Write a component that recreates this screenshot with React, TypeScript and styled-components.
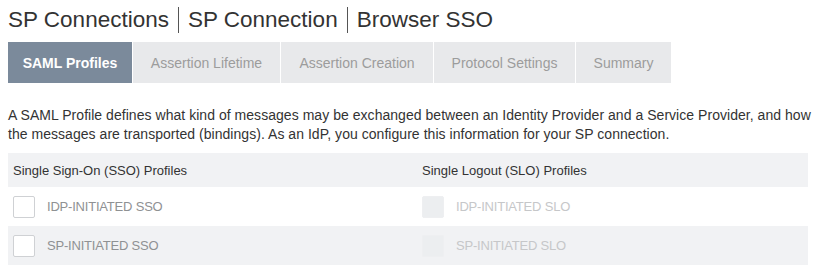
import styled, { createGlobalStyle } from "styled-components";

const GlobalStyle = createGlobalStyle`
    body {
        margin: 0;
        background: #ffffff;
        font-family: "Liberation Sans", Arial, sans-serif;
        color: #333333;
    }
`;

const Page = styled.div`
    padding: 7px 8px 0 8px;
`;

const Title = styled.h1`
    margin: 0;
    display: flex;
    align-items: center;
    font-size: 22.5px;
    font-weight: normal;
    color: #333;
    height: 26px;
`;

const Crumb = styled.span<{ $first?: boolean }>`
    display: inline-block;
    line-height: 26px;
    ${(p) => !p.$first && `
        border-left: 1px solid #555;
        margin-left: 9px;
        padding-left: 9px;
    `}
`;

const Tabs = styled.div`
    display: flex;
    gap: 1px;
    margin-top: 9px;
`;

const Tab = styled.div<{ $active?: boolean; $w: number }>`
    width: ${(p) => p.$w}px;
    height: 41px;
    display: flex;
    align-items: center;
    justify-content: center;
    font-size: 14px;
    font-weight: ${(p) => (p.$active ? "bold" : "normal")};
    color: ${(p) => (p.$active ? "#ffffff" : "#9c9c9c")};
    background: ${(p) => (p.$active ? "#7b8a9b" : "#e8e9eb")};
`;

const Description = styled.p`
    margin: 23px 0 0 0;
    font-size: 14px;
    line-height: 19px;
    letter-spacing: 0.04px;
    color: #333;
    white-space: nowrap;
`;

const Table = styled.div`
    margin-top: 9px;
    width: 800px;
`;

const Row = styled.div<{ $tone: "header" | "white" | "gray" }>`
    display: grid;
    grid-template-columns: 409px 1fr;
    height: ${(p) => (p.$tone === "header" ? 34 : 39)}px;
    align-items: center;
    background: ${(p) => (p.$tone === "white" ? "#ffffff" : "#f1f2f4")};
`;

const HeaderCell = styled.div`
    padding-left: 5px;
    font-size: 13px;
    color: #333;
`;

const Cell = styled.label`
    display: flex;
    align-items: center;
    padding-left: 5px;
    gap: 12px;
`;

const Box = styled.span<{ $disabled?: boolean }>`
    width: 20px;
    height: 20px;
    border-radius: 2px;
    border: 1px solid ${(p) => (p.$disabled ? "#eeeff1" : "#cfd1d4")};
    background: ${(p) => (p.$disabled ? "#eceef0" : "#ffffff")};
`;

const Label = styled.span<{ $disabled?: boolean }>`
    font-size: 13px;
    letter-spacing: -0.2px;
    color: ${(p) => (p.$disabled ? "#c6c7c9" : "#8f9193")};
`;

const tabs = [
    { name: "SAML Profiles", w: 124, active: true },
    { name: "Assertion Lifetime", w: 147 },
    { name: "Assertion Creation", w: 152 },
    { name: "Protocol Settings", w: 141 },
    { name: "Summary", w: 95 },
];

const rows = [
    { sso: "IDP-INITIATED SSO", slo: "IDP-INITIATED SLO", tone: "white" as const },
    { sso: "SP-INITIATED SSO", slo: "SP-INITIATED SLO", tone: "gray" as const },
];

export default function App() {
    return (
        <Page>
            <GlobalStyle />
            <Title>
                <Crumb $first>SP Connections</Crumb>
                <Crumb>SP Connection</Crumb>
                <Crumb>Browser SSO</Crumb>
            </Title>
            <Tabs>
                {tabs.map((t) => (
                    <Tab key={t.name} $w={t.w} $active={t.active}>{t.name}</Tab>
                ))}
            </Tabs>
            <Description>
                A SAML Profile defines what kind of messages may be exchanged between an Identity Provider and a Service Provider, and how
                <br />
                the messages are transported (bindings). As an IdP, you configure this information for your SP connection.
            </Description>
            <Table>
                <Row $tone="header">
                    <HeaderCell>Single Sign-On (SSO) Profiles</HeaderCell>
                    <HeaderCell>Single Logout (SLO) Profiles</HeaderCell>
                </Row>
                {rows.map((r) => (
                    <Row key={r.sso} $tone={r.tone}>
                        <Cell>
                            <Box />
                            <Label>{r.sso}</Label>
                        </Cell>
                        <Cell>
                            <Box $disabled />
                            <Label $disabled>{r.slo}</Label>
                        </Cell>
                    </Row>
                ))}
            </Table>
        </Page>
    );
}
